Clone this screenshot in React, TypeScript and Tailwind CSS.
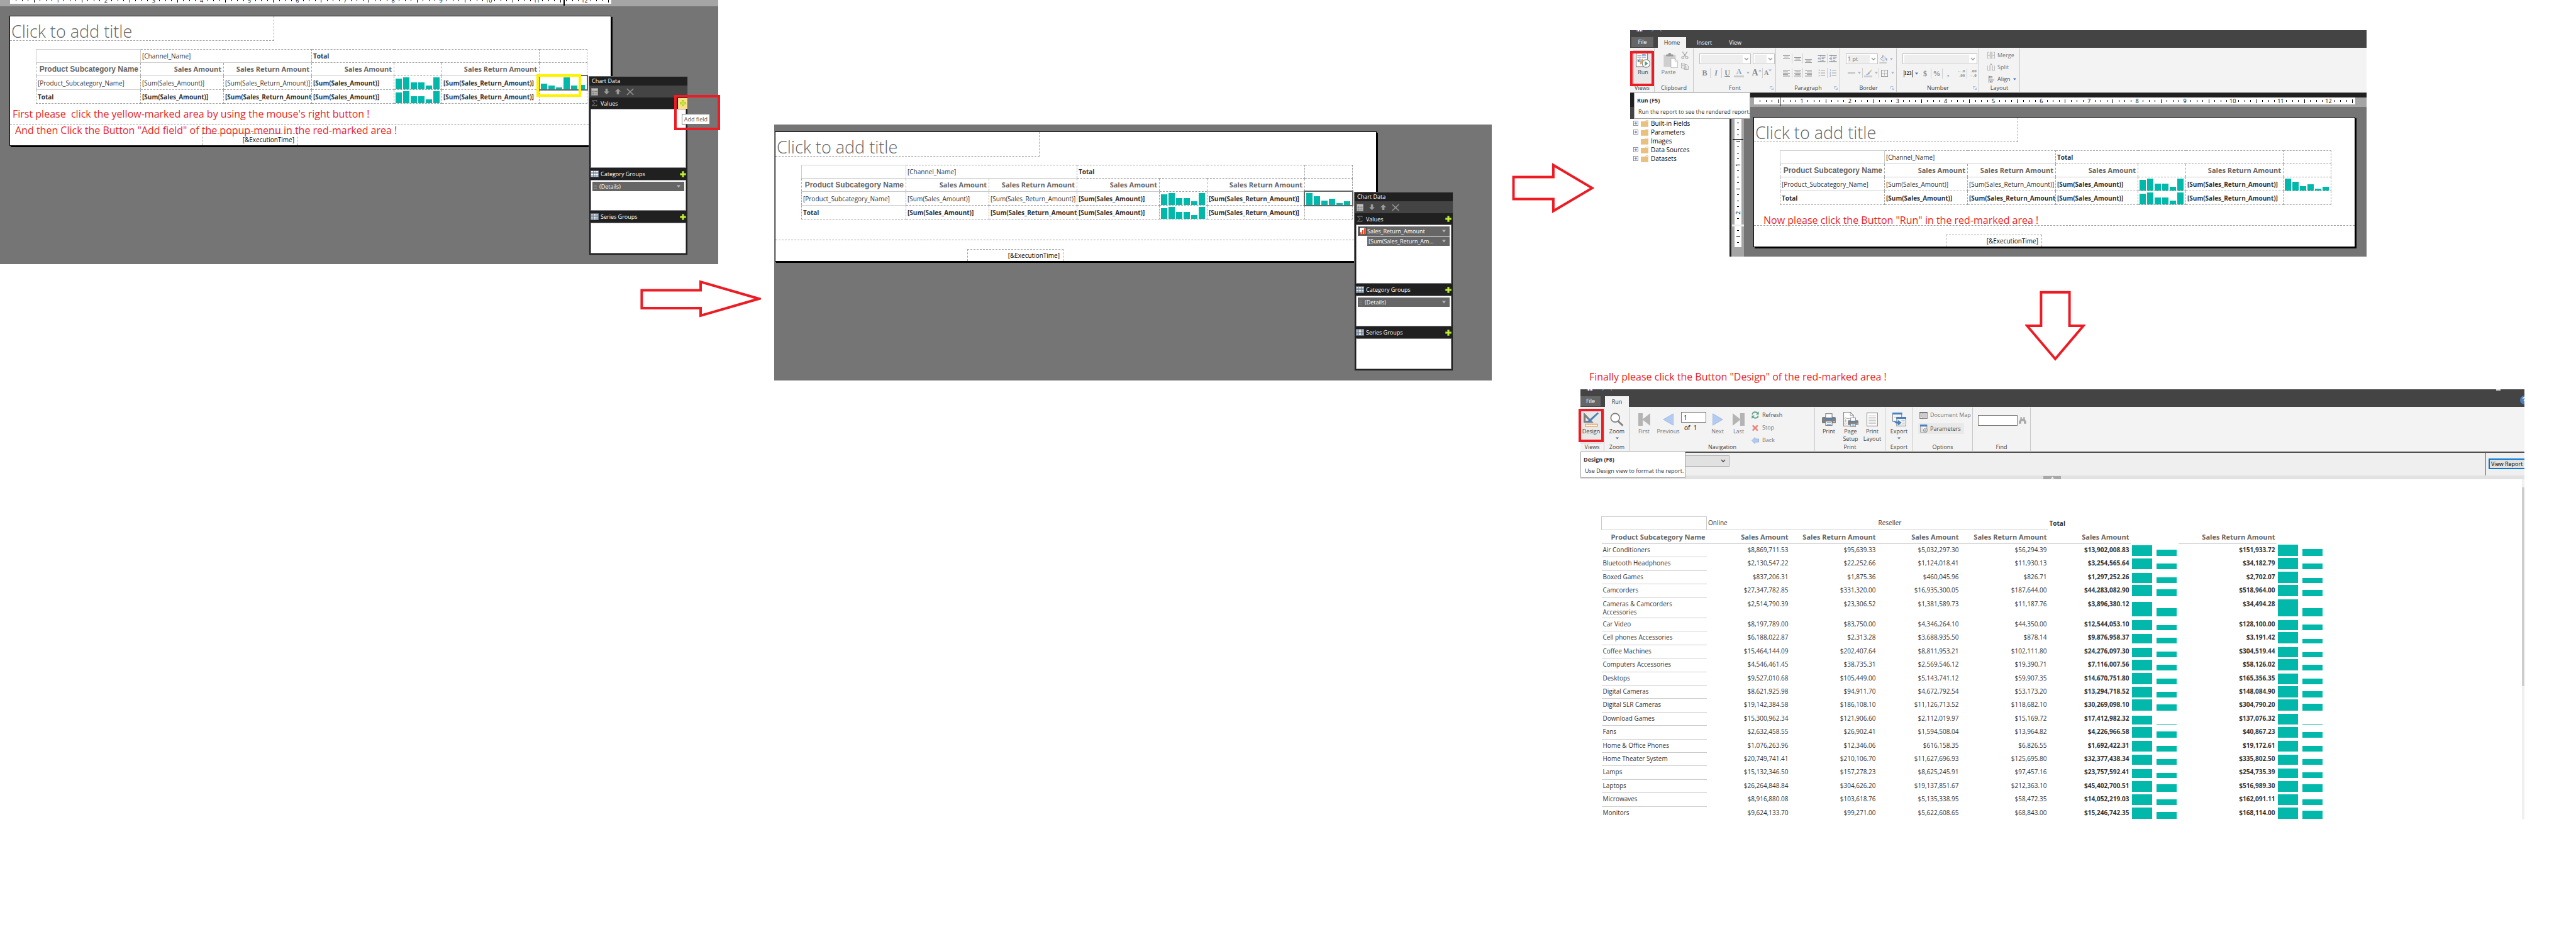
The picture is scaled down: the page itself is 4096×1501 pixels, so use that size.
import React from "react";

const TEAL = "#01b8aa";
const RED = "#ed1c24";

/* ---------- drawings ---------- */

type SvgProps = { w: number; h: number; box: string; children: React.ReactNode; className?: string };

function Draw({ w, h, box, children, className }: SvgProps) {
  return (
    <svg width={w} height={h} viewBox={box} fill="none" aria-hidden="true" className={className ?? "shrink-0"}>
      {children}
    </svg>
  );
}

function Bars({ heights, barWidth, gap, height }: { heights: number[]; barWidth: number; gap: number; height: number }) {
  const width = heights.length * (barWidth + gap) - gap;
  return (
    <svg width={width} height={height} viewBox={`0 0 ${width} ${height}`} className="block" role="img" aria-label="Column chart">
      {heights.map((h, i) => (
        <rect key={i} x={i * (barWidth + gap)} y={height - h} width={barWidth} height={h} fill={TEAL} />
      ))}
    </svg>
  );
}

function Caret({ color = "#9db4d6" }: { color?: string }) {
  return (
    <Draw w={5} h={4} box="0 0 5 4">
      <path d="M0 0.5h5L2.5 3.5z" fill={color} />
    </Draw>
  );
}

function Chevron({ color = "#9a9a9a" }: { color?: string }) {
  return (
    <Draw w={8} h={6} box="0 0 8 6" className="pointer-events-none mx-[2px] shrink-0">
      <path d="M1 1l3 3.2L7 1" stroke={color} strokeWidth="1.3" />
    </Draw>
  );
}

function Plus() {
  return (
    <Draw w={10} h={10} box="0 0 12 12">
      <path d="M4.5 0.5h3v4h4v3h-4v4h-3v-4h-4v-3h4z" fill="#c9f23c" stroke="#8fc31a" />
    </Draw>
  );
}

function GridIcon({ columns = false }: { columns?: boolean }) {
  return (
    <Draw w={13} h={11} box="0 0 16 13">
      <rect width="16" height="13" fill="#6f7b88" />
      {[0, 1, 2].map((c) =>
        [0, 1, 2, 3].map((r) => (
          <rect
            key={`${c}-${r}`}
            x={1 + c * 5}
            y={1 + r * 3}
            width="4"
            height="2"
            fill={(columns ? c === 1 : r % 2 === 0) ? "#ffffff" : "#b9cbe0"}
          />
        )),
      )}
    </Draw>
  );
}

const arrowProps = { stroke: RED, strokeWidth: 5, fill: "none" };

/* ---------- rulers ---------- */

function Ruler({ vertical = false, cells }: { vertical?: boolean; cells: number }) {
  const marks = Array.from({ length: cells }, (_, i) => i + 1);
  return (
    <div
      aria-hidden="true"
      className={
        vertical
          ? "flex h-full w-[11px] flex-col bg-white text-[9px] leading-none text-black"
          : "flex h-[11px] w-full overflow-hidden bg-white text-[9px] leading-none text-black"
      }
    >
      <span className="flex-[0.5]" />
      {marks.map((m) => (
        <span key={m} className="flex min-h-0 min-w-0 flex-1 items-center justify-center">
          {m % 8 === 0 ? (
            <span className={vertical ? "-rotate-90" : ""}>{m / 8}</span>
          ) : m % 8 === 4 ? (
            <span className={vertical ? "h-px w-[6px] bg-black" : "h-[6px] w-px bg-black"} />
          ) : (
            <span className={vertical ? "h-px w-[3px] bg-black" : "h-[3px] w-px bg-black"} />
          )}
        </span>
      ))}
      {vertical && <span className="flex-[0.25]" />}
    </div>
  );
}

/* ---------- report design page ---------- */

const SALES_BARS = [17, 19, 11, 11, 6, 19];
const CELL = "border border-dashed border-[#a0a0a0] p-0";
const SOLID_B = " border-b-[#cccccc] [border-bottom-style:solid]";
const TXT = "overflow-hidden whitespace-nowrap px-[2px] text-[10px] leading-[14px] text-[#333333]";
const HEAD = "overflow-hidden whitespace-nowrap px-[3px] text-right text-[11px] font-bold leading-[16px] text-[#666666]";

function DesignTable({ returnBars, selected }: { returnBars: number[]; selected: boolean }) {
  return (
    <table className="ml-[41px] mt-[13px] w-[876px] table-fixed border-collapse">
      <colgroup>
        <col className="w-[166px]" />
        <col className="w-[132px]" />
        <col className="w-[140px]" />
        <col className="w-[131px]" />
        <col className="w-[76px]" />
        <col className="w-[155px]" />
        <col className="w-[76px]" />
      </colgroup>
      <tbody>
        <tr className="h-[21px]">
          <td className="border border-[#cccccc] p-0" />
          <td colSpan={2} className={CELL + SOLID_B}>
            <div className={TXT}>[Channel_Name]</div>
          </td>
          <td colSpan={3} className={CELL}>
            <div className={TXT + " font-bold"}>Total</div>
          </td>
          <td className={CELL} />
        </tr>
        <tr className="h-[21px]">
          <th className={CELL + SOLID_B}>
            <div className="whitespace-nowrap px-[3px] text-right font-['Liberation_Sans',sans-serif] text-[12px] font-bold leading-[16px] text-[#666666]">
              Product Subcategory Name
            </div>
          </th>
          <th className={CELL + SOLID_B}>
            <div className={HEAD}>Sales Amount</div>
          </th>
          <th className={CELL + SOLID_B}>
            <div className={HEAD}>Sales Return Amount</div>
          </th>
          <th className={CELL + SOLID_B}>
            <div className={HEAD}>Sales Amount</div>
          </th>
          <th className={CELL} />
          <th className={CELL + SOLID_B}>
            <div className={HEAD}>Sales Return Amount</div>
          </th>
          <th className={CELL} />
        </tr>
        <tr className="h-[22px]">
          <td className={CELL + SOLID_B}>
            <div className={TXT}>[Product_Subcategory_Name]</div>
          </td>
          <td className={CELL}>
            <div className={TXT}>[Sum(Sales_Amount)]</div>
          </td>
          <td className={CELL}>
            <div className={TXT}>[Sum(Sales_Return_Amount)]</div>
          </td>
          <td className={CELL}>
            <div className={TXT + " font-bold"}>[Sum(Sales_Amount)]</div>
          </td>
          <td className={CELL}>
            <div className="pl-[2px]">
              <Bars heights={SALES_BARS} barWidth={10} gap={2} height={20} />
            </div>
          </td>
          <td className={CELL}>
            <div className={TXT + " font-bold"}>[Sum(Sales_Return_Amount)]</div>
          </td>
          <td className={CELL + " relative"}>
            <div className="pl-[2px]">
              <Bars heights={returnBars} barWidth={10} gap={2} height={20} />
            </div>
            {selected && <span className="absolute -inset-[2px] border-2 border-[#666666]" />}
          </td>
        </tr>
        <tr className="h-[22px]">
          <td className={CELL}>
            <div className={TXT + " font-bold"}>Total</div>
          </td>
          <td className={CELL}>
            <div className={TXT + " font-bold"}>[Sum(Sales_Amount)]</div>
          </td>
          <td className={CELL}>
            <div className={TXT + " font-bold"}>[Sum(Sales_Return_Amount)]</div>
          </td>
          <td className={CELL}>
            <div className={TXT + " font-bold"}>[Sum(Sales_Amount)]</div>
          </td>
          <td className={CELL}>
            <div className="pl-[2px]">
              <Bars heights={SALES_BARS} barWidth={10} gap={2} height={20} />
            </div>
          </td>
          <td className={CELL}>
            <div className={TXT + " font-bold"}>[Sum(Sales_Return_Amount)]</div>
          </td>
          <td className={CELL} />
        </tr>
      </tbody>
    </table>
  );
}

function DesignPage({ returnBars, selected = false, children }: { returnBars: number[]; selected?: boolean; children?: React.ReactNode }) {
  return (
    <section className="relative border border-black bg-white shadow-[2px_2px_0_0_#000]">
      <div className="border-b border-dashed border-[#a0a0a0] pb-[32px]">
        <h2 className="flex h-[39px] w-[420px] items-center border-b border-r border-dashed border-[#a0a0a0] pl-[2px] pt-[8px] text-[27px] font-light leading-none text-[#666666]">
          Click to add title
        </h2>
        <DesignTable returnBars={returnBars} selected={selected} />
      </div>
      <div className="ml-[305px] mt-[14px] flex h-[19px] w-[153px] items-center justify-end border border-b-0 border-dashed border-[#a0a0a0] pr-[5px] text-[10px] text-black">
        [&amp;ExecutionTime]
      </div>
      {children}
    </section>
  );
}

/* ---------- chart data panel ---------- */

function PanelHead({ icon, label, hot = false, tall = false }: { icon: React.ReactNode; label: string; hot?: boolean; tall?: boolean }) {
  return (
    <div className={"flex items-center pl-[2px] text-white " + (tall ? "h-[19px]" : "h-[18px]")}>
      <span className="flex w-[16px] justify-start">{icon}</span>
      <span className="flex-1">{label}</span>
      <button aria-label={"Add " + label} className={"flex h-[17px] w-[15px] items-center justify-center " + (hot ? "bg-[#ffdf8b]" : "")}>
        <Plus />
      </button>
    </div>
  );
}

function PanelItem({ icon, label }: { icon?: React.ReactNode; label: string }) {
  return (
    <button className="flex h-[15px] w-full items-center bg-[#666666] pl-[2px] pr-[6px] text-left text-white">
      {icon}
      <span className="flex-1 truncate">{label}</span>
      <Draw w={6} h={5} box="0 0 6 5">
        <path d="M0 0.5h6L3 4.5z" fill="#b5b5b5" />
      </Draw>
    </button>
  );
}

const Grip = (
  <Draw w={9} h={8} box="0 0 9 8">
    <path d="M0 1.5h5M0 4h5M0 6.5h5" stroke="#8a8a8a" />
  </Draw>
);

function ChartDataPanel({ hot = false, values }: { hot?: boolean; values?: React.ReactNode }) {
  const list = "mx-[2px] flex flex-col gap-px border border-[#8c8c94] bg-white p-[2px]";
  return (
    <aside className="absolute right-[-123px] top-[95px] w-[158px] border border-[#6e6e6e] bg-[#202020] pb-[2px] text-[9px] leading-[13px]">
      <div className="h-[14px] pl-[4px] text-white">Chart Data</div>
      <div className="flex h-[19px] items-center gap-[9px] bg-[#444444] pl-[3px]">
        <Draw w={11} h={12} box="0 0 14 15">
          <rect x="0.5" y="0.5" width="13" height="14" fill="#b4b4b4" stroke="#8d8d8d" />
          <path d="M1 2.5h12" stroke="#d8d8d8" />
          <circle cx="4" cy="7" r="1.2" stroke="#666" />
          <circle cx="4" cy="11.5" r="1.2" stroke="#666" />
          <path d="M7 7h5M7 11.5h5" stroke="#666" />
        </Draw>
        <Draw w={9} h={9} box="0 0 10 10">
          <path d="M3 0h4v5h3L5 10 0 5h3z" fill="#9b9b9b" />
        </Draw>
        <Draw w={9} h={9} box="0 0 10 10">
          <path d="M3 10h4V5h3L5 0 0 5h3z" fill="#9b9b9b" />
        </Draw>
        <Draw w={12} h={12} box="0 0 15 14">
          <path d="M1 1l13 12M14 1L1 13" stroke="#8f8f8f" strokeWidth="2" />
        </Draw>
      </div>
      <PanelHead
        hot={hot}
        label="Values"
        icon={
          <Draw w={12} h={10} box="0 0 12 10">
            <path d="M10 2.5V1H2.5l4 4-4 4H10V7.5" stroke="#8a8a8a" />
          </Draw>
        }
      />
      <div className={list + " h-[94px]"}>{values}</div>
      <PanelHead tall label="Category Groups" icon={<GridIcon />} />
      <div className={list + " h-[49px]"}>
        <PanelItem icon={Grip} label="(Details)" />
      </div>
      <PanelHead tall label="Series Groups" icon={<GridIcon columns />} />
      <div className={list + " h-[49px]"} />
    </aside>
  );
}

/* ---------- ribbon parts ---------- */

function Group({ label, width, launcher = false, children }: { label: string; width: string; launcher?: boolean; children: React.ReactNode }) {
  return (
    <div className={"my-px flex shrink-0 flex-col border-r border-[#c8c8c8] " + width}>
      <div className="h-[57px]">{children}</div>
      <div className="flex h-[12px] items-center">
        <span className={"flex-1 text-center " + (launcher ? "pl-[10px]" : "")}>{label}</span>
        {launcher && (
          <button aria-label={label + " settings"} className="mr-[3px]">
            <Draw w={6} h={6} box="0 0 7 7">
              <path d="M0.5 5V0.5H5M3 3l3.5 3.5M6.5 3v3.5H3" stroke="#9bb7d9" />
            </Draw>
          </button>
        )}
      </div>
    </div>
  );
}

function Sep() {
  return <span className="h-[16px] w-px shrink-0 bg-[#cfcfcf]" />;
}

function Tool({ label, width = "w-[17px]", children }: { label: string; width?: string; children: React.ReactNode }) {
  return (
    <button aria-label={label} className={"flex h-[16px] shrink-0 items-center justify-center " + width}>
      {children}
    </button>
  );
}

function Combo({ label, width, value = "" }: { label: string; width: string; value?: string }) {
  return (
    <span className={"flex h-[17px] shrink-0 items-center border border-[#c0c0c0] bg-white " + width}>
      <select aria-label={label} className="ml-[2px] h-[13px] min-w-0 flex-1 appearance-none bg-[#eeeeee] text-[9px] leading-[13px] text-[#777777]">
        <option>{value}</option>
      </select>
      <Chevron />
    </span>
  );
}

function AlignIcon({ kind }: { kind: "left" | "center" | "right" }) {
  const x = (len: number) => (kind === "left" ? 0 : kind === "center" ? (14 - len) / 2 : 14 - len);
  const lens = [14, 10, 14, 10, 14];
  return (
    <Draw w={11} h={11} box="0 0 14 13">
      {lens.map((l, i) => (
        <rect key={i} x={x(l)} y={i * 2.9} width={l} height="1.2" fill="#8c8c8c" />
      ))}
    </Draw>
  );
}

function VAlignIcon({ at }: { at: number }) {
  return (
    <Draw w={11} h={15} box="0 0 14 19">
      <path d={`M0 ${at}h14M2.5 ${at + 3}h9M0 ${at + 6}h14`} stroke="#8c8c8c" strokeWidth="1.2" />
    </Draw>
  );
}

function IndentIcon({ flip = false }: { flip?: boolean }) {
  return (
    <Draw w={13} h={12} box="0 0 16 14">
      <path d="M0.5 1.5h15M8 4.5h7.5M8 7.5h5M8 10.5h4M0.5 13h15" stroke="#8c8c8c" strokeWidth="1.4" />
      <path d="M5.5 0v14" stroke="#8c8c8c" strokeDasharray="1 1" />
      <path d={flip ? "M6.5 7L3 4v2H0v2h3v2z" : "M0 7l3.5-3v2h3v2h-3v2z"} fill="#8fb0dc" />
    </Draw>
  );
}

function ListIcon({ numbered = false }: { numbered?: boolean }) {
  return (
    <Draw w={11} h={12} box="0 0 14 15">
      <path d="M5 2h9M5 7.5h9M5 13h9" stroke="#9a9a9a" strokeWidth="1.2" />
      {numbered ? (
        <path d="M1 0.5h1V4M0.5 6h2L1 9h2M0.5 11h2v3.5h-2M1 12.7h1.5" stroke="#9ab0d0" />
      ) : (
        <path d="M1 2h2M1 7.5h2M1 13h2" stroke="#9ab0d0" strokeWidth="2.5" />
      )}
    </Draw>
  );
}

function Tabs({ active, others, fileWidth, activeWidth }: { active: string; others: string[]; fileWidth: string; activeWidth: string }) {
  return (
    <div className="flex flex-1 items-end gap-[7px] text-[9px] leading-[12px] text-white">
      <button className={"mb-px h-[16px] bg-[#666666] text-center " + fileWidth}>File</button>
      <button className={"h-[17px] bg-[#f3f3f3] text-center text-[#333333] " + activeWidth}>{active}</button>
      {others.map((o) => (
        <button key={o} className="h-[17px] px-[10px]">
          {o}
        </button>
      ))}
    </div>
  );
}

function QuickAccess() {
  return (
    <Draw w={48} h={3} box="0 0 48 3" className="absolute left-[6px] top-0">
      <path d="M4 0h10v2H4z" fill="#9a68bd" />
      <path d="M6 0h2v2H6zM10 0h2v2h-2z" fill="#fff" />
      <path d="M28 1.8l3-1.8" stroke="#4a7ebb" strokeWidth="1.5" />
      <path d="M42 0l2 2" stroke="#7a7a7a" strokeWidth="1.5" />
    </Draw>
  );
}

function BigButton({ label, second, width, dim = false, className = "", children }: { label: string; second?: React.ReactNode; width: string; dim?: boolean; className?: string; children: React.ReactNode }) {
  return (
    <button className={"flex shrink-0 flex-col items-center leading-[12px] " + width + (dim ? " text-[#777777] " : " ") + className}>
      <span className="flex h-[26px] items-center justify-center pt-px">{children}</span>
      <span className="mt-px whitespace-nowrap">{label}</span>
      {second}
    </button>
  );
}

function Folder() {
  return (
    <Draw w={12} h={11} box="0 0 15 13">
      <path d="M0 2h8l2-2h5v13H0z" fill="#e8c080" />
      <path d="M9.5 1.5h4.5" stroke="#fff" />
    </Draw>
  );
}

function PrinterShape() {
  return (
    <>
      <path d="M0 9.5q0-2 2-2h24q2 0 2 2v9q0 1.5-2 1.5H2q-2 0-2-1.5z" fill="#7f7f7f" />
      <path d="M6 7h16v5H6z" fill="#4a80bd" />
      <rect x="7.5" y="0.7" width="13" height="8.5" fill="#fff" stroke="#7f7f7f" strokeWidth="1.4" />
      <rect x="7.5" y="16" width="13" height="8.5" fill="#fff" stroke="#7f7f7f" strokeWidth="1.4" />
      <path d="M10 19h8M10 22h8" stroke="#4a80bd" strokeWidth="1.4" />
      <rect x="23.5" y="16" width="2" height="2" fill="#fff" />
    </>
  );
}

/* ---------- screenshots ---------- */

function StepOne() {
  return (
    <figure className="relative h-[420px] bg-[#757575]">
      <div className="overflow-hidden">
        <div className="-mt-[5px] flex h-[15px] bg-[#a5a5a5] pl-[16px] pr-[170px]">
          <div className="relative w-full">
            <Ruler cells={100} />
            <span className="absolute right-[74px] top-0 h-[14px] w-[2px] bg-black" />
          </div>
        </div>
      </div>
      <div className="pl-[15px] pr-[170px] pt-[15px]">
        <DesignPage returnBars={[9, 6, 3, 19, 6, 7]} selected>
          <p className="absolute left-[4px] top-[144px] whitespace-pre text-[16px] leading-[22px] text-[#ed1c24]">
            {"First please  click the yellow-marked area by using the mouse's right button !"}
          </p>
          <p className="absolute left-[8px] top-[170px] whitespace-pre text-[16px] leading-[22px] text-[#ed1c24]">
            {"And then Click the Button \"Add field\" of the popup-menu in the red-marked area !"}
          </p>
          <ChartDataPanel hot />
          <span className="absolute left-[837px] top-[92px] h-[36px] w-[71px] border-4 border-[#fff200]" />
        </DesignPage>
      </div>
      <span role="tooltip" className="absolute right-[13px] top-[181px] whitespace-nowrap border border-[#767676] bg-white px-[3px] text-[9px] leading-[15px] text-[#575757]">
        Add field
      </span>
      <span className="absolute right-[-3px] top-[151px] h-[56px] w-[73px] border-4 border-[#ed1c24]" />
    </figure>
  );
}

function StepTwo() {
  return (
    <figure className="h-[407px] bg-[#757575] pl-px pr-[183px] pt-[11px]">
      <DesignPage returnBars={[19, 14, 7, 10, 3, 6]} selected>
        <ChartDataPanel
          values={
            <>
              <PanelItem
                icon={
                  <Draw w={13} h={13} box="0 0 16 16">
                    <rect x="0.5" y="0.5" width="13" height="14" fill="#fff" stroke="#222" />
                    <path d="M2 14v-4h2.5v4zM6 14V6h2.5v8zM10 14V2.5h2.5V14z" fill="#d9411e" />
                  </Draw>
                }
                label="Sales_Return_Amount"
              />
              <div className="pl-[15px]">
                <PanelItem label="[Sum(Sales_Return_Am..." />
              </div>
            </>
          }
        />
      </DesignPage>
    </figure>
  );
}

const TREE = [
  { name: "Built-in Fields", open: true },
  { name: "Parameters", open: true },
  { name: "Images", open: false },
  { name: "Data Sources", open: true },
  { name: "Datasets", open: true },
];

function HomeRibbon() {
  return (
    <div className="flex h-[71px] bg-[#f3f3f3] text-[9px] leading-[12px] text-[#444444]">
      <Group label="Views" width="w-[39px]">
        <BigButton label="Run" width="w-[31px]" className="ml-[5px] mt-[3px] h-[54px] border border-[#c8c8c8] bg-[#e8e8e8] pt-px">
          <Draw w={23} h={24} box="0 0 28 29">
            <rect x="0.7" y="0.7" width="22" height="26" fill="#fff" stroke="#7f7f7f" strokeWidth="1.4" />
            <path d="M3 5.5h8M3 8.5h8" stroke="#7f7f7f" />
            <path d="M12 3h7M12 5.5h8M12 8.5h8" stroke="#4a80bd" />
            <path d="M4 17v-4h2v4zM7 17v-6h2v6z" fill="#4a80bd" />
            <path d="M4 12v5h7" stroke="#7f7f7f" />
            <path d="M11 12l3-1v5l-4 7-2-2z" fill="#e8a44e" />
            <circle cx="20" cy="20.5" r="7.5" fill="#fff" stroke="#7f7f7f" strokeWidth="1.4" />
            <path d="M17.5 16l6.5 4.5-6.5 4.5z" fill="#55a17e" />
          </Draw>
        </BigButton>
      </Group>
      <Group label="Clipboard" width="w-[62px]">
        <div className="flex pl-[7px] pt-[5px]">
          <BigButton label="Paste" width="w-[30px]" dim>
            <Draw w={23} h={24} box="0 0 28 30" className="ml-[6px] shrink-0">
              <path d="M0 4h24v24H0z" fill="#cfcfcf" />
              <path d="M5 7V3h4q0-3 3-3t3 3h4v4z" fill="#9a9a9a" />
              <path d="M14.5 11.5h8l5 5v13h-13z" fill="#fff" stroke="#b0b0b0" />
              <path d="M22.5 11.5v5h5" stroke="#b0b0b0" />
            </Draw>
          </BigButton>
          <div className="flex w-[22px] flex-col items-center gap-[6px]">
            <button aria-label="Cut">
              <Draw w={12} h={12} box="0 0 14 15">
                <path d="M2 0l7 10M12 0L5 10" stroke="#a0a0a0" strokeWidth="1.6" />
                <circle cx="3" cy="12" r="2.3" stroke="#a0a0a0" strokeWidth="1.4" />
                <circle cx="11" cy="12" r="2.3" stroke="#a0a0a0" strokeWidth="1.4" />
              </Draw>
            </button>
            <button aria-label="Copy">
              <Draw w={12} h={11} box="0 0 15 14">
                <path d="M0.5 0.5h5l3 3v7h-8zM6.5 3.5h5l3 3v7h-8z" fill="#f6f6f6" stroke="#a0a0a0" />
                <path d="M2 4h3M2 6h3M8 8h5M8 10.5h5" stroke="#a0a0a0" />
              </Draw>
            </button>
          </div>
        </div>
      </Group>
      <Group label="Font" width="w-[131px]" launcher>
        <div className="flex gap-[3px] pl-[9px] pt-[8px]">
          <Combo label="Font family" width="w-[82px]" />
          <Combo label="Font size" width="w-[35px]" />
        </div>
        <div className="mt-[6px] flex items-center pl-[9px] font-['Liberation_Serif',serif] text-[12px] text-[#8a8a8a]">
          <Tool label="Bold">
            <b>B</b>
          </Tool>
          <Sep />
          <Tool label="Italic">
            <b className="italic">I</b>
          </Tool>
          <Sep />
          <Tool label="Underline">
            <b className="underline">U</b>
          </Tool>
          <Tool label="Font color" width="w-[20px]">
            <span className="border-b-[3px] border-[#cccccc] px-[4px] font-bold leading-[11px] text-[#8b9fc4]">A</span>
          </Tool>
          <Tool label="More font colors" width="w-[9px]">
            <Caret />
          </Tool>
          <Tool label="Grow font" width="w-[18px]">
            <b className="text-[14px]">A</b>
            <Draw w={5} h={12} box="0 0 5 12">
              <path d="M0 3.5h5L2.5 0.5z" fill="#9db4d6" />
            </Draw>
          </Tool>
          <Sep />
          <Tool label="Shrink font" width="w-[16px]">
            <b className="text-[10px]">A</b>
            <Draw w={5} h={12} box="0 0 5 12">
              <path d="M0 0.5h5L2.5 3.5z" fill="#9db4d6" />
            </Draw>
          </Tool>
        </div>
      </Group>
      <Group label="Paragraph" width="w-[102px]" launcher>
        <div className="flex items-center pl-[8px] pt-[8px]">
          <Tool label="Align top">
            <VAlignIcon at={3} />
          </Tool>
          <Sep />
          <Tool label="Align middle" width="w-[16px]">
            <VAlignIcon at={7} />
          </Tool>
          <Sep />
          <Tool label="Align bottom" width="w-[16px]">
            <VAlignIcon at={11} />
          </Tool>
          <span className="w-[5px]" />
          <Tool label="Decrease indent">
            <IndentIcon />
          </Tool>
          <Sep />
          <Tool label="Increase indent">
            <IndentIcon flip />
          </Tool>
        </div>
        <div className="mt-[7px] flex items-center pl-[8px]">
          <Tool label="Align left">
            <AlignIcon kind="left" />
          </Tool>
          <Sep />
          <Tool label="Align center" width="w-[16px]">
            <AlignIcon kind="center" />
          </Tool>
          <Sep />
          <Tool label="Align right" width="w-[16px]">
            <AlignIcon kind="right" />
          </Tool>
          <span className="w-[5px]" />
          <Tool label="Bullets">
            <ListIcon />
          </Tool>
          <Sep />
          <Tool label="Numbering">
            <ListIcon numbered />
          </Tool>
        </div>
      </Group>
      <Group label="Border" width="w-[90px]" launcher>
        <div className="flex items-center pl-[9px] pt-[8px]">
          <Combo label="Border width" width="w-[51px]" value="1 pt" />
          <Tool label="Fill color">
            <Draw w={13} h={14} box="0 0 16 18">
              <path d="M2 8l6-6 6 6-6 5z" fill="#e8e8e8" stroke="#8b9fc4" />
              <path d="M7 0v7" stroke="#a0a0a0" />
              <path d="M14 7q2 4 0 5" stroke="#8fb0dc" strokeWidth="2" />
              <path d="M0 15h15v3H0z" fill="#cccccc" />
            </Draw>
          </Tool>
          <Tool label="More fill colors" width="w-[8px]">
            <Caret />
          </Tool>
        </div>
        <div className="mt-[6px] flex items-center pl-[9px]">
          <Tool label="Border style">
            <Draw w={12} h={2} box="0 0 12 2">
              <path d="M0 1h12" stroke="#8c8c8c" />
            </Draw>
          </Tool>
          <Tool label="More border styles" width="w-[9px]">
            <Caret />
          </Tool>
          <Sep />
          <Tool label="Border color">
            <Draw w={13} h={14} box="0 0 17 18">
              <path d="M16 1L9 8l2 2 4-4z" fill="#d9c08c" />
              <path d="M9 7l3 3q-2 4-9 3 4-1 6-6z" fill="#9bb4dc" />
              <path d="M0 14.5h17v3.5H0z" fill="#cccccc" />
            </Draw>
          </Tool>
          <Tool label="More border colors" width="w-[8px]">
            <Caret />
          </Tool>
          <Sep />
          <Tool label="Borders">
            <Draw w={11} h={11} box="0 0 13 13">
              <rect x="0.5" y="0.5" width="12" height="12" stroke="#8c8c8c" />
              <path d="M6.5 2v9M2 6.5h9" stroke="#8c8c8c" strokeDasharray="1 1" />
            </Draw>
          </Tool>
          <Tool label="More borders" width="w-[9px]">
            <Caret />
          </Tool>
        </div>
      </Group>
      <Group label="Number" width="w-[131px]" launcher>
        <div className="flex pl-[9px] pt-[8px]">
          <Combo label="Number format" width="w-[119px]" />
        </div>
        <div className="mt-[7px] flex items-center pl-[9px] font-['Liberation_Serif',serif] text-[12px] font-bold text-[#8a8a8a]">
          <Tool label="Placeholder style">
            <span className="border-x border-[#333333] text-[8px] leading-[12px] text-[#333333]">123</span>
          </Tool>
          <Tool label="More placeholder styles" width="w-[10px]">
            <Caret color="#3f6fb0" />
          </Tool>
          <Tool label="Currency" width="w-[18px]">
            $
          </Tool>
          <Sep />
          <Tool label="Percent">%</Tool>
          <Sep />
          <Tool label="Thousands">,</Tool>
          <span className="w-[3px]" />
          <Tool label="Increase decimals" width="w-[18px]">
            <span className="text-right text-[7px] leading-[7px]">
              <span className="text-[#8fb0dc]">←</span>.0
              <br />
              .00
            </span>
          </Tool>
          <Sep />
          <Tool label="Decrease decimals" width="w-[17px]">
            <span className="text-right text-[7px] leading-[7px]">
              .00
              <br />
              <span className="text-[#8fb0dc]">→</span>.0
            </span>
          </Tool>
        </div>
      </Group>
      <Group label="Layout" width="w-[65px]">
        <div className="flex flex-col gap-[7px] pl-[13px] pt-[5px] text-[#777777]">
          <button className="flex items-center gap-[4px]">
            <Draw w={12} h={12} box="0 0 16 15">
              <path d="M3 1H0.5v13H3M13 1h2.5v13H13" stroke="#a0a0a0" />
              <rect x="5" width="6" height="15" fill="#cccccc" />
              <path d="M1 7.5h4M15 7.5h-4" stroke="#8c8c8c" />
            </Draw>
            Merge
          </button>
          <button className="flex items-center gap-[4px]">
            <Draw w={12} h={12} box="0 0 16 15">
              <path d="M0.5 4v10H4M15.5 4v10H12" stroke="#a0a0a0" />
              <path d="M5.5 3v12M10.5 3v12" stroke="#bbbbbb" strokeWidth="2" />
              <path d="M5.5 0h5L8 3z" fill="#a0a0a0" />
            </Draw>
            Split
          </button>
          <button className="flex items-center gap-[4px] text-[#555555]">
            <Draw w={12} h={12} box="0 0 16 15">
              <path d="M3.5 0v15" stroke="#555" />
              <path d="M4 1.5h6v3H4z" stroke="#777" />
              <path d="M4 7h10v4H4z" fill="#c4c4c4" />
              <path d="M12 13H6l2-2M6 13l2 2" stroke="#555" />
            </Draw>
            Align
            <Caret color="#3f6fb0" />
          </button>
        </div>
      </Group>
    </div>
  );
}

function StepThree() {
  return (
    <figure className="relative flex min-w-0 flex-1 flex-col">
      <div className="relative flex h-[28px] bg-[#444444] pl-[2px]">
        <QuickAccess />
        <Tabs active="Home" others={["Insert", "View"]} fileWidth="w-[35px]" activeWidth="w-[45px]" />
      </div>
      <HomeRibbon />
      <div className="h-[8px] border-t border-[#555555] bg-[#202020]" />
      <div className="flex">
        <div className="flex w-[158px] shrink-0 flex-col">
          <div className="h-[15px] bg-[#202020]" />
          <div className="h-[19px] bg-[#444444]" />
          <ul className="text-[10px] leading-[14px] text-black">
            {TREE.map((n) => (
              <li key={n.name} className="flex items-center pl-[5px]">
                <span className="flex w-[12px]">
                  {n.open && (
                    <button aria-label={"Expand " + n.name}>
                      <Draw w={8} h={8} box="0 0 9 9">
                        <rect x="0.5" y="0.5" width="8" height="8" fill="#fff" stroke="#8a8a8a" />
                        <path d="M2 4.5h5M4.5 2v5" stroke="#3558a8" />
                      </Draw>
                    </button>
                  )}
                </span>
                <Folder />
                <span className="pl-[4px]">{n.name}</span>
              </li>
            ))}
          </ul>
        </div>
        <div className="w-[3px] shrink-0 bg-[#202020]" />
        <div className="flex min-w-0 flex-1 flex-col">
          <div className="h-[15px] bg-[#a5a5a5] pl-[36px] pr-[18px]">
            <div className="relative">
              <Ruler cells={100} />
              <span className="absolute left-[41px] top-0 h-[14px] w-px bg-black" />
            </div>
          </div>
          <div className="flex bg-[#757575]">
            <div className="relative w-[20px] shrink-0 bg-[#a5a5a5] pb-[15px] pl-[5px] pt-[16px]">
              <Ruler vertical cells={21} />
              <span className="absolute left-[2px] top-[51px] h-px w-[17px] bg-black" />
              <span className="absolute left-px top-[187px] h-[3px] w-[19px] bg-[#eeeeee]" />
            </div>
            <div className="min-w-0 flex-1 pb-[15px] pl-[15px] pr-[18px] pt-[16px]">
              <DesignPage returnBars={[19, 14, 7, 10, 3, 6]}>
                <p className="absolute left-[15px] top-[152px] whitespace-nowrap text-[16px] leading-[22px] text-[#ed1c24]">
                  Now please click the Button "Run" in the red-marked area !
                </p>
              </DesignPage>
            </div>
          </div>
        </div>
      </div>
      <div role="tooltip" className="absolute left-[6px] top-[99px] h-[42px] w-[185px] border border-[#a0a0a0] bg-white pl-[4px] pt-[5px] text-[9px] leading-[13px] text-[#333333]">
        <b className="block">Run (F5)</b>
        <span className="mt-[5px] block whitespace-nowrap pl-[2px]">Run the report to see the rendered report.</span>
      </div>
      <span className="absolute left-0 top-[33px] h-[56px] w-[38px] border-4 border-[#ed1c24]" />
    </figure>
  );
}

const NavArrow = ({ dir, bar = false }: { dir: "left" | "right"; bar?: boolean }) => (
  <Draw w={bar ? 19 : 17} h={20} box={bar ? "0 0 24 25" : "0 0 21 25"}>
    {bar ? (
      dir === "left" ? (
        <path d="M0 0h9v25H0zM24 0v25L8 12.5z" fill="#b4b4b4" />
      ) : (
        <path d="M15 0h9v25h-9zM0 0v25l16-12.5z" fill="#b4b4b4" />
      )
    ) : (
      <path d={dir === "left" ? "M20.5 1v23L1 12.5z" : "M0.5 1v23L20 12.5z"} fill="#b3cbf1" stroke="#94b0de" />
    )}
  </Draw>
);

function RunRibbon() {
  const small = "flex items-center gap-[5px] leading-[12px]";
  return (
    <div className="flex h-[71px] bg-[#f3f3f3] text-[9px] leading-[12px] text-[#444444]">
      <Group label="Views" width="w-[38px]">
        <BigButton label="Design" width="w-[35px]" className="mt-[3px] h-[54px] border border-l-0 border-[#c8c8c8] bg-[#e8e8e8] pt-px">
          <Draw w={24} h={24} box="0 0 30 29">
            <path d="M0 0l20 21H0zM4 10v7h7z" fill="#7f7f7f" fillRule="evenodd" />
            <path d="M28 0l2 2.5L13 19l-5 2.5L10 16z" fill="#4a80bd" />
            <rect x="3.7" y="23.7" width="24" height="4.6" fill="#fff" stroke="#e68a3c" strokeWidth="1.4" />
            <path d="M7 24v2M10.5 24v2M14 24v2M17.5 24v2M21 24v2M24.5 24v2" stroke="#e68a3c" />
          </Draw>
        </BigButton>
      </Group>
      <Group label="Zoom" width="w-[41px]">
        <div className="flex justify-center pt-[5px]">
          <BigButton label="Zoom" width="w-[40px]" second={<span className="mt-[3px]"><Caret color="#3f6fb0" /></span>}>
            <Draw w={22} h={22} box="0 0 27 28">
              <circle cx="10" cy="10.5" r="8.8" fill="#fff" stroke="#7f7f7f" strokeWidth="2.2" />
              <path d="M16 17.5l9.5 9" stroke="#7f7f7f" strokeWidth="3.5" />
            </Draw>
          </BigButton>
        </div>
      </Group>
      <Group label="Navigation" width="w-[294px]">
        <div className="flex pl-[4px] pt-[5px]">
          <BigButton label="First" width="w-[36px]" dim>
            <NavArrow dir="left" bar />
          </BigButton>
          <BigButton label="Previous" width="w-[41px]" dim>
            <NavArrow dir="left" />
          </BigButton>
          <div className="w-[41px] pt-[2px] text-black">
            <input aria-label="Page number" defaultValue="1" className="h-[17px] w-[40px] border border-[#777777] bg-white px-[3px] text-[10px]" />
            <span className="block pl-[5px] pt-[2px] text-[10px]">of&nbsp; 1</span>
          </div>
          <BigButton label="Next" width="w-[34px]" dim>
            <NavArrow dir="right" />
          </BigButton>
          <BigButton label="Last" width="w-[33px]" dim>
            <NavArrow dir="right" bar />
          </BigButton>
          <div className="ml-[4px] flex flex-col gap-[8px] pt-px">
            <button className={small}>
              <Draw w={12} h={12} box="0 0 14 14">
                <path d="M1.5 6Q2 1.5 7 1.5q3 0 4.5 2M12.5 8Q12 12.5 7 12.5q-3 0-4.5-2" stroke="#5aa287" strokeWidth="2.2" />
                <path d="M13.5 0v6H8zM0.5 14V8H6z" fill="#5aa287" />
              </Draw>
              Refresh
            </button>
            <button className={small + " text-[#777777]"}>
              <Draw w={12} h={11} box="0 0 14 13">
                <path d="M2 1.5l9.5 10M11.5 1.5L2 11.5" stroke="#e98478" strokeWidth="3" />
              </Draw>
              Stop
            </button>
            <button className={small + " text-[#777777]"}>
              <Draw w={12} h={11} box="0 0 14 13">
                <path d="M0.5 6.5l6-6v3h7v6h-7v3z" fill="#b3cbf1" stroke="#94b0de" />
              </Draw>
              Back
            </button>
          </div>
        </div>
      </Group>
      <Group label="Print" width="w-[112px]">
        <div className="flex pl-[4px] pt-[5px]">
          <BigButton label="Print" width="w-[36px]">
            <Draw w={22} h={20} box="0 0 28 25">
              <PrinterShape />
            </Draw>
          </BigButton>
          <BigButton label="Page" second={<span>Setup</span>} width="w-[33px]">
            <Draw w={24} h={24} box="0 0 30 30">
              <path d="M0.7 0.7H14l6 6V28H0.7z" fill="#fff" stroke="#8a8a8a" strokeWidth="1.4" />
              <path d="M14 0.7v6.5h6.5" stroke="#8a8a8a" />
              <circle cx="4.5" cy="13" r="1.3" stroke="#8a8a8a" />
              <circle cx="4.5" cy="18" r="1.3" stroke="#8a8a8a" />
              <circle cx="4.5" cy="23" r="1.3" stroke="#8a8a8a" />
              <path d="M7 13h6" stroke="#8a8a8a" />
              <g transform="translate(9 11) scale(0.75)">
                <PrinterShape />
              </g>
            </Draw>
          </BigButton>
          <BigButton label="Print" second={<span>Layout</span>} width="w-[36px]">
            <Draw w={18} h={22} box="0 0 23 28">
              <rect x="0.7" y="0.7" width="21.5" height="26.5" fill="#fff" stroke="#8a8a8a" strokeWidth="1.4" />
              <path d="M4 6.5h15M4 9.7h15M4 12.9h15M4 16.1h15M4 19.3h15M4 22.5h15" stroke="#b0b0b0" />
            </Draw>
          </BigButton>
        </div>
      </Group>
      <Group label="Export" width="w-[44px]">
        <div className="flex justify-center pt-[5px]">
          <BigButton label="Export" width="w-[40px]" second={<span className="mt-[3px]"><Caret color="#3f6fb0" /></span>}>
            <Draw w={22} h={22} box="0 0 28 28">
              <path d="M0.7 1h18v17h-18z" fill="#fff" stroke="#8a8a8a" strokeWidth="1.4" />
              <path d="M0 0h20v4H0z" fill="#4a80bd" />
              <path d="M3 7h13M3 10h6" stroke="#b0b0b0" />
              <path d="M8.7 10h18.5v17H8.7z" fill="#fff" stroke="#8a8a8a" strokeWidth="1.4" />
              <path d="M8 9h20v4H8z" fill="#4a80bd" />
              <path d="M18 16h7M20 19h5M20 22h5M12 25h13" stroke="#b0b0b0" />
              <path d="M3 14q0 4.500 8 4.500v-4l8 6-8 6v-4Q3 22.500 3 14z" fill="#4a80bd" />
            </Draw>
          </BigButton>
        </div>
      </Group>
      <Group label="Options" width="w-[95px]">
        <div className="flex flex-col items-start gap-[5px] pl-[8px] pt-[4px]">
          <button className="flex h-[16px] items-center gap-[4px] pl-[2px] text-[#777777]">
            <Draw w={13} h={11} box="0 0 16 14">
              <rect x="0.7" y="0.7" width="14.6" height="12.6" fill="#fff" stroke="#7a7a7a" strokeWidth="1.4" />
              <path d="M0 0h16v3H0z" fill="#7a7a7a" />
              <path d="M2 5h3M2 7.5h3M2 10h3" stroke="#7a7a7a" />
              <path d="M7 3h8v10H7z" fill="#cccccc" />
              <path d="M6.5 3v11" stroke="#7a7a7a" />
            </Draw>
            Document Map
          </button>
          <button className="flex h-[17px] items-center gap-[4px] bg-[#e9e9e9] pl-[3px] pr-[5px]">
            <Draw w={12} h={13} box="0 0 15 16">
              <path d="M0.5 1h13v14h-13z" fill="#fff" stroke="#7a7a7a" />
              <path d="M0 0h14v4H0z" fill="#4a80bd" />
              <path d="M2 7h4M2 11h4" stroke="#7a7a7a" />
              <circle cx="10.5" cy="11" r="3.8" fill="#f4f4f4" stroke="#7a7a7a" />
              <circle cx="10.5" cy="11" r="1.3" stroke="#7a7a7a" />
            </Draw>
            Parameters
          </button>
        </div>
      </Group>
      <Group label="Find" width="w-[92px]">
        <div className="flex items-center gap-[2px] pl-[8px] pt-[12px]">
          <input aria-label="Find text" className="h-[17px] w-[63px] border border-[#777777] bg-white px-[3px]" />
          <button aria-label="Find">
            <Draw w={12} h={11} box="0 0 15 13">
              <path d="M3 0h3v3h3V0h3v4l3 5v4h-5V8H5v5H0V9l3-5z" fill="#aaaaaa" />
            </Draw>
          </button>
        </div>
      </Group>
    </div>
  );
}

type Row = [string, string, string, string, string, string, string, number, number, number, number];

const ROWS: Row[] = [
  ["Air Conditioners", "$8,869,711.53", "$95,639.33", "$5,032,297.30", "$56,294.39", "$13,902,008.83", "$151,933.72", 17, 10, 18, 11],
  ["Bluetooth Headphones", "$2,130,547.22", "$22,252.66", "$1,124,018.41", "$11,930.13", "$3,254,565.64", "$34,182.79", 17, 9, 18, 9],
  ["Boxed Games", "$837,206.31", "$1,875.36", "$460,045.96", "$826.71", "$1,297,252.26", "$2,702.07", 16, 9, 18, 8],
  ["Camcorders", "$27,347,782.85", "$331,320.00", "$16,935,300.05", "$187,644.00", "$44,283,082.90", "$518,964.00", 18, 11, 18, 10],
  ["Cameras & Camcorders Accessories", "$2,514,790.39", "$23,306.52", "$1,381,589.73", "$11,187.76", "$3,896,380.12", "$34,494.28", 23, 13, 27, 13],
  ["Car Video", "$8,197,789.00", "$83,750.00", "$4,346,264.10", "$44,350.00", "$12,544,053.10", "$128,100.00", 16, 8, 16, 9],
  ["Cell phones Accessories", "$6,188,022.87", "$2,313.28", "$3,688,935.50", "$878.14", "$9,876,958.37", "$3,191.42", 15, 9, 18, 7],
  ["Coffee Machines", "$15,464,144.09", "$202,407.64", "$8,811,953.21", "$102,111.80", "$24,276,097.30", "$304,519.44", 15, 9, 16, 8],
  ["Computers Accessories", "$4,546,461.45", "$38,735.31", "$2,569,546.12", "$19,390.71", "$7,116,007.56", "$58,126.02", 17, 9, 18, 9],
  ["Desktops", "$9,527,010.68", "$105,449.00", "$5,143,741.12", "$59,907.35", "$14,670,751.80", "$165,356.35", 18, 9, 17, 9],
  ["Digital Cameras", "$8,621,925.98", "$94,911.70", "$4,672,792.54", "$53,173.20", "$13,294,718.52", "$148,084.90", 17, 9, 18, 10],
  ["Digital SLR Cameras", "$19,142,384.58", "$186,108.10", "$11,126,713.52", "$118,682.10", "$30,269,098.10", "$304,790.20", 18, 10, 18, 11],
  ["Download Games", "$15,300,962.34", "$121,906.60", "$2,112,019.97", "$15,169.72", "$17,412,982.32", "$137,076.32", 14, 1, 17, 1],
  ["Fans", "$2,632,458.55", "$26,902.41", "$1,594,508.04", "$13,964.82", "$4,226,966.58", "$40,867.23", 17, 10, 17, 9],
  ["Home & Office Phones", "$1,076,263.96", "$12,346.06", "$616,158.35", "$6,826.55", "$1,692,422.31", "$19,172.61", 17, 9, 17, 9],
  ["Home Theater System", "$20,749,741.41", "$210,106.70", "$11,627,696.93", "$125,695.80", "$32,377,438.34", "$335,802.50", 16, 9, 16, 9],
  ["Lamps", "$15,132,346.50", "$157,278.23", "$8,625,245.91", "$97,457.16", "$23,757,592.41", "$254,735.39", 14, 8, 15, 9],
  ["Laptops", "$26,264,848.84", "$304,626.20", "$19,137,851.67", "$212,363.10", "$45,402,700.51", "$516,989.30", 17, 12, 17, 12],
  ["Microwaves", "$8,916,880.08", "$103,618.76", "$5,135,338.95", "$58,472.35", "$14,052,219.03", "$162,091.11", 17, 9, 17, 9],
  ["Monitors", "$9,624,133.70", "$99,271.00", "$5,622,608.65", "$68,843.00", "$15,246,742.35", "$168,114.00", 18, 11, 18, 13],
];

function ReportTable() {
  const line = "border-b border-[#cccccc] p-0";
  const head = "whitespace-nowrap px-[2px] text-right text-[11px] font-bold text-[#666666]";
  return (
    <table className="w-[1149px] table-fixed border-collapse text-[10px] leading-[13px] text-[#333333]">
      <colgroup>
        <col className="w-[167px]" />
        <col className="w-[132px]" />
        <col className="w-[139px]" />
        <col className="w-[132px]" />
        <col className="w-[140px]" />
        <col className="w-[131px]" />
        <col className="w-[76px]" />
        <col className="w-[156px]" />
        <col className="w-[76px]" />
      </colgroup>
      <thead className="text-left font-normal">
        <tr className="h-[21px]">
          <td className="border border-[#cccccc] p-0" />
          <td colSpan={2} className={line + " pl-[2px]"}>
            Online
          </td>
          <td colSpan={2} className={line + " pl-[2px]"}>
            Reseller
          </td>
          <td colSpan={4} className="p-0 pl-[2px] font-bold">
            Total
          </td>
        </tr>
        <tr className="h-[22px]">
          <th className={line + " " + head}>Product Subcategory Name</th>
          <th className={line + " " + head}>Sales Amount</th>
          <th className={line + " " + head}>Sales Return Amount</th>
          <th className={line + " " + head}>Sales Amount</th>
          <th className={line + " " + head}>Sales Return Amount</th>
          <th className={line + " " + head}>Sales Amount</th>
          <th className="p-0" />
          <th className={line + " " + head}>Sales Return Amount</th>
          <th className="p-0" />
        </tr>
      </thead>
      <tbody>
        {ROWS.map((r, i) => {
          const last = i === ROWS.length - 1;
          const height = i === 4 ? "h-[32px]" : last ? "h-[20px]" : i % 5 === 1 || i % 5 === 3 ? "h-[22px]" : "h-[21px]";
          const barBox = i === 4 ? 28 : 18;
          return (
            <tr key={r[0]} className={height + " align-top"}>
              <td className={(last ? "p-0" : line) + " px-[2px] pt-[3px]"}>{r[0]}</td>
              {[r[1], r[2], r[3], r[4]].map((v, c) => (
                <td key={c} className="p-0 px-[2px] pt-[3px] text-right">
                  {v}
                </td>
              ))}
              <td className="p-0 px-[2px] pt-[3px] text-right font-bold">{r[5]}</td>
              <td className="p-0 pl-[2px] pt-px">
                <Bars heights={[r[7], r[8]]} barWidth={32} gap={7} height={barBox} />
              </td>
              <td className="p-0 px-[2px] pt-[3px] text-right font-bold">{r[6]}</td>
              <td className="p-0 pl-[2px] pt-px">
                <Bars heights={[r[9], r[10]]} barWidth={32} gap={7} height={barBox} />
              </td>
            </tr>
          );
        })}
      </tbody>
    </table>
  );
}

function StepFour() {
  return (
    <figure className="relative">
      <div className="overflow-hidden">
        <div className="relative flex h-[28px] bg-[#444444]">
          <QuickAccess />
          <Tabs active="Run" others={[]} fileWidth="w-[32px]" activeWidth="w-[38px]" />
          <Draw w={7} h={14} box="0 0 7 14" className="mt-[10px] shrink-0">
            <circle cx="7" cy="7" r="7" fill="#4a80bd" />
            <path d="M4.5 5q0.5-2 2.5-2M6 8l1-1" stroke="#fff" strokeWidth="1.4" />
          </Draw>
          <span className="absolute right-[38px] top-0 h-[2px] w-[7px] bg-[#dddddd]" />
        </div>
        <RunRibbon />
        <div className="flex h-[38px] border-t-2 border-[#505050] bg-[#efefef]">
          <div className="flex-1 pl-[16px] pt-[4px]">
            <span className="flex h-[18px] w-[221px] items-center border border-[#adadad] bg-[#e1e1e1] pr-[3px]">
              <select aria-label="Parameter value" className="h-full min-w-0 flex-1 appearance-none bg-transparent" />
              <Chevron color="#444444" />
            </span>
          </div>
          <div className="w-[62px] border-l border-[#606060] pl-[4px] pt-[3px]">
            <button className="h-[17px] w-[70px] whitespace-nowrap border-2 border-[#0078d7] bg-[#e1e1e1] pl-[2px] text-left text-[9px] leading-[13px] text-black">
              View Report
            </button>
          </div>
        </div>
        <div className="flex h-[6px] items-center justify-center bg-[#e2e2e2]">
          <button aria-label="Collapse parameters" className="mr-[1px] flex h-[5px] w-[28px] items-center justify-center bg-[#a8a8a8]">
            <Draw w={5} h={3} box="0 0 5 3">
              <path d="M0 3h5L2.5 0z" fill="#fff" />
            </Draw>
          </button>
        </div>
        <div className="flex bg-white">
          <div className="flex-1 pl-[33px] pt-[59px]">
            <ReportTable />
          </div>
          <div className="w-[4px] bg-[#f0f0f0] pt-[13px]">
            <div className="h-[316px] bg-[#cdcdcd]" />
          </div>
        </div>
      </div>
      <div role="tooltip" className="absolute left-0 top-[99px] h-[42px] w-[167px] border border-[#a0a0a0] bg-white pl-[4px] pt-[5px] text-[9px] leading-[13px] text-[#333333]">
        <b className="block">Design (F8)</b>
        <span className="mt-[5px] block whitespace-nowrap pl-[2px]">Use Design view to format the report.</span>
      </div>
      <span className="absolute left-[-3px] top-[31px] h-[53px] w-[40px] border-4 border-[#ed1c24]" />
    </figure>
  );
}

export default function App() {
  return (
    <main className="grid min-h-screen grid-cols-[1231fr_1173fr_1692fr] items-start bg-white font-['Open_Sans','Noto_Sans',sans-serif]">
      <div className="min-w-0">
        <div className="pr-[89px]">
          <StepOne />
        </div>
        <div className="mt-[25px] flex justify-end pr-[21px]">
          <Draw w={192} h={60} box="0 0 242 75">
            <path d="M3 20.5h118V3.5L238 37.5 121 71.5V56.5H3z" {...arrowProps} />
          </Draw>
        </div>
      </div>
      <div className="min-w-0 pr-[32px] pt-[198px]">
        <StepTwo />
      </div>
      <div className="min-w-0 pt-[48px]">
        <div className="flex items-start pr-[333px]">
          <Draw w={131} h={80} box="0 0 165 101" className="mr-[57px] mt-[211px] shrink-0">
            <path d="M3 28.5h80V4.5L161 50.5 83 96.5V72.5H3z" {...arrowProps} />
          </Draw>
          <StepThree />
        </div>
        <Draw w={96} h={112} box="0 0 121 141" className="ml-[816px] mt-[54px]">
          <path d="M32 3.5h57v67h28L60.5 137 4 70.5h28z" {...arrowProps} />
        </Draw>
        <p className="ml-[123px] mt-[14px] whitespace-nowrap text-[16px] leading-[22px] text-[#ed1c24]">
          Finally please click the Button "Design" of the red-marked area !
        </p>
        <div className="ml-[109px] mr-[82px] mt-[9px]">
          <StepFour />
        </div>
      </div>
    </main>
  );
}
